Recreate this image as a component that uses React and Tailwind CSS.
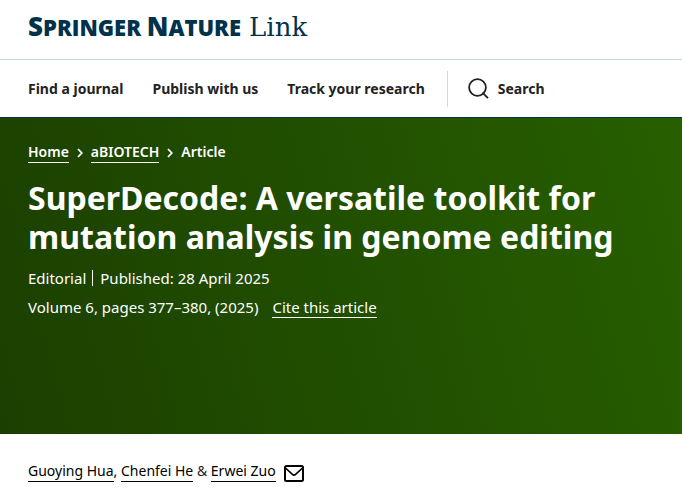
const navLinks = ['Find a journal', 'Publish with us', 'Track your research']

function Logo() {
  return (
    <a href="#" aria-label="Springer Nature Link" className="flex items-baseline gap-2 leading-7 text-[#01324b]">
      <span className="font-['Open_Sans'] text-[22px] font-extrabold whitespace-nowrap">
        <span className="text-[26px]">S</span>PRINGER <span className="text-[26px]">N</span>ATURE
      </span>
      <span className="font-['DejaVu_Serif',serif] text-[26px]">Link</span>
    </a>
  )
}

function SearchIcon() {
  return (
    <svg width="22" height="22" viewBox="0 0 22 22" fill="none" stroke="currentColor" strokeWidth="1.8" aria-hidden="true">
      <circle cx="9.5" cy="9.5" r="8.4" />
      <path d="M14.4 14.6 L20 20.2" />
    </svg>
  )
}

function Chevron() {
  return (
    <svg width="6" height="10" viewBox="0 0 6 10" fill="none" stroke="currentColor" strokeWidth="1.8" aria-hidden="true">
      <path d="M1 1 L4.8 5 L1 9" />
    </svg>
  )
}

function MailIcon() {
  return (
    <svg width="20" height="17" viewBox="0 0 20 17" fill="none" stroke="currentColor" strokeWidth="2" aria-hidden="true">
      <rect x="1" y="1" width="18" height="15" rx="1.5" />
      <path d="M1.5 3 L8.4 9.4 Q10 10.8 11.6 9.4 L18.5 3" strokeWidth="1.7" />
    </svg>
  )
}

export default function App() {
  return (
    <div className="bg-white font-['Noto_Sans',sans-serif] text-[15px] leading-6 text-[#222]">
      <header className="border-b border-[#01324b]">
        <div className="border-b border-[#c5dcea] px-7 pt-3 pb-[18px]">
          <Logo />
        </div>
        <nav className="flex items-center px-7 pt-[11px] pb-[10px] text-sm font-bold whitespace-nowrap">
          <div className="flex gap-[29px]">
            {navLinks.map((label) => (
              <a key={label} href="#">{label}</a>
            ))}
          </div>
          <button className="ml-[22px] flex h-9 items-center gap-2 border-l border-[#c5dcea] pl-5">
            <SearchIcon />
            Search
          </button>
        </nav>
      </header>

      <section className="bg-linear-[75deg,#1b3f00,#275f00] px-7 pt-6 pb-[116px] text-white">
        <nav aria-label="Breadcrumb" className="flex items-center gap-2 text-sm leading-5 font-semibold">
          <a href="#" className="border-b border-white">Home</a>
          <Chevron />
          <a href="#" className="border-b border-white">aBIOTECH</a>
          <Chevron />
          <span className="border-b border-transparent">Article</span>
        </nav>
        <h1 className="mt-[15px] text-[32px] leading-[39px] font-bold">
          SuperDecode: A versatile toolkit for mutation analysis in genome editing
        </h1>
        <div className="mt-3 flex items-center leading-5">
          <span>Editorial</span>
          <span className="ml-[6px] h-4 border-l border-white pl-[7px] leading-4">Published: 28 April 2025</span>
        </div>
        <div className="mt-[9px] flex gap-[14px] leading-5">
          <span>Volume 6, pages 377–380, (2025)</span>
          <a href="#" className="border-b border-white">Cite this article</a>
        </div>
      </section>

      <main className="px-7 pt-[27px] pb-2 text-sm leading-5">
        <div className="flex items-start whitespace-pre text-black">
          <a href="#" className="border-b border-black">Guoying Hua</a>
          <span>, </span>
          <a href="#" className="border-b border-black">Chenfei He</a>
          <span className="text-[#222]"> &amp; </span>
          <a href="#" className="border-b border-black">Erwei Zuo</a>
          <a href="#" aria-label="Email Erwei Zuo" className="ml-2 self-end"><MailIcon /></a>
        </div>
      </main>
    </div>
  )
}
